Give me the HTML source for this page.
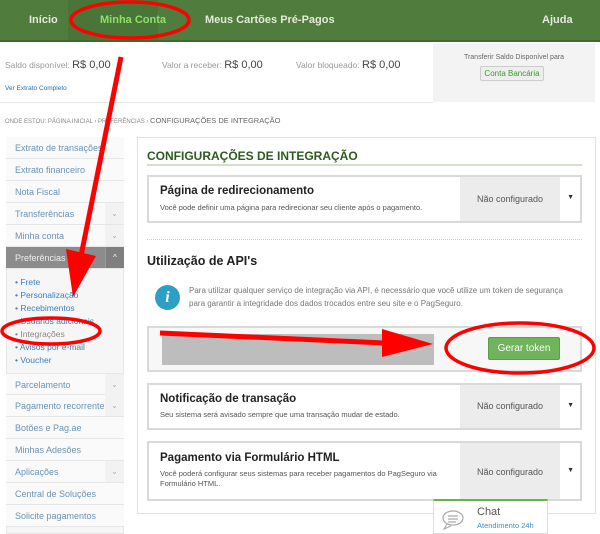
<!DOCTYPE html>
<html><head><meta charset="utf-8"><style>
*{box-sizing:border-box;margin:0;padding:0}
body{width:600px;height:534px;overflow:hidden;background:#fff;font-family:"Liberation Sans",sans-serif;position:relative}
.a{position:absolute}
.nav{left:0;top:0;width:600px;height:42px;background:#507c3e;border-bottom:2px solid #3f6a2f}
.nav span{position:absolute;top:14px;font-size:11px;font-weight:bold;color:#e3ead9}
.sb{left:6px;width:118px;height:22px;border-bottom:1px solid #e6e6e6;background:#fafafa;font-size:9px;color:#6a93b5;padding:6px 0 0 9px}
.sb i{position:absolute;right:0;top:0;width:19px;height:21px;background:#f2f2f2;font-style:normal;color:#aaa;font-size:8px;text-align:center;line-height:21px}
.box{left:147px;width:435px;border:2px solid #d9d9d9;background:#fff}
.st{position:absolute;top:0;bottom:0;right:20px;width:100px;background:#ececec;font-size:9px;color:#555;text-align:center}
.tri{position:absolute;right:6px;font-size:7px;color:#333}
.bt{font-size:11.5px;font-weight:bold;color:#222;position:absolute;left:11px}
.bd{font-size:7.5px;color:#555;position:absolute;left:11px;line-height:10px}
.sub{left:15px;font-size:8.5px;color:#3a7fc0}
</style></head><body>
<div class="a nav"><div class="a" style="left:68px;top:0;width:90px;height:40px;background:#4a7538"></div>
<span style="left:29px">Início</span><span style="left:100px;color:#8ee06a">Minha Conta</span><span style="left:205px">Meus Cartões Pré-Pagos</span><span style="left:542px">Ajuda</span></div>
<div class="a" style="left:5px;top:59px;font-size:8.5px;color:#999">Saldo disponível: <b style="font-weight:normal;font-size:11px;color:#444">R$ 0,00</b></div>
<div class="a" style="left:162px;top:59px;font-size:8.5px;color:#999">Valor a receber: <b style="font-weight:normal;font-size:11px;color:#444">R$ 0,00</b></div>
<div class="a" style="left:296px;top:59px;font-size:8.5px;color:#999">Valor bloqueado: <b style="font-weight:normal;font-size:11px;color:#444">R$ 0,00</b></div>
<div class="a" style="left:5px;top:85px;font-size:6.5px;color:#2a6cc0">Ver Extrato Completo</div>
<div class="a" style="left:0;top:102px;width:433px;height:1px;background:#e8e8e8"></div>
<div class="a" style="left:433px;top:43px;width:162px;height:59px;background:#f3f3f3"></div>
<div class="a" style="left:433px;top:54px;width:162px;text-align:center;font-size:7px;color:#666">Transferir Saldo Disponível para</div>
<div class="a" style="left:480px;top:66px;width:64px;height:15px;background:#eee;border:1px solid #ccc;border-radius:2px;font-size:8px;color:#3a9a2a;text-align:center;line-height:13px">Conta Bancária</div>
<div class="a" style="left:5px;top:116px;font-size:6px;color:#888">ONDE ESTOU: PÁGINA INICIAL › PREFERÊNCIAS › <span style="font-size:7.5px;color:#666">CONFIGURAÇÕES DE INTEGRAÇÃO</span></div>

<div class="a" style="left:6px;top:137px;width:118px;height:397px;background:#f6f6f6;border:1px solid #e6e6e6"></div>
<div class="a sb" style="top:137px">Extrato de transações</div>
<div class="a sb" style="top:159px">Extrato financeiro</div>
<div class="a sb" style="top:181px">Nota Fiscal</div>
<div class="a sb" style="top:203px">Transferências<i>⌄</i></div>
<div class="a sb" style="top:225px">Minha conta<i>⌄</i></div>
<div class="a sb" style="top:247px;background:#8c8c8c;color:#eee">Preferências<i style="background:#7f7f7f;color:#fff;border-left:1px solid #999">^</i></div>
<div class="a sub" style="top:277px">• Frete</div>
<div class="a sub" style="top:290px">• Personalização</div>
<div class="a sub" style="top:303px">• Recebimentos</div>
<div class="a sub" style="top:316px">• Usuários adicionais</div>
<div class="a sub" style="top:329px;color:#888">• Integrações</div>
<div class="a sub" style="top:342px">• Avisos por e-mail</div>
<div class="a sub" style="top:355px">• Voucher</div>
<div class="a sb" style="top:373px;border-top:1px solid #e6e6e6">Parcelamento<i>⌄</i></div>
<div class="a sb" style="top:395px">Pagamento recorrente<i>⌄</i></div>
<div class="a sb" style="top:417px">Botões e Pag.ae</div>
<div class="a sb" style="top:439px">Minhas Adesões</div>
<div class="a sb" style="top:461px">Aplicações<i>⌄</i></div>
<div class="a sb" style="top:483px">Central de Soluções</div>
<div class="a sb" style="top:505px">Solicite pagamentos</div>

<div class="a" style="left:137px;top:137px;width:459px;height:377px;border:1px solid #e2e2e2"></div>
<div class="a" style="left:147px;top:149px;font-size:12px;font-weight:bold;color:#2d5a1e">CONFIGURAÇÕES DE INTEGRAÇÃO</div>
<div class="a" style="left:147px;top:164px;width:435px;height:2px;background:#d5dfcc"></div>
<div class="a box" style="top:175px;height:48px"><div class="bt" style="top:8px">Página de redirecionamento</div><div class="bd" style="top:26px">Você pode definir uma página para redirecionar seu cliente após o pagamento.</div><div class="st" style="line-height:44px">Não configurado</div><div class="tri" style="top:17px">▼</div></div>
<div class="a" style="left:147px;top:239px;width:435px;border-top:1px dotted #ccc"></div>
<div class="a" style="left:147px;top:254px;font-size:12.5px;font-weight:bold;color:#222">Utilização de API's</div>
<div class="a" style="left:155px;top:285px;width:25px;height:25px;border-radius:50%;background:#2e9fc4;color:#fff;font:italic bold 16px 'Liberation Serif',serif;text-align:center;line-height:25px">i</div>
<div class="a" style="left:189px;top:285px;font-size:8px;color:#777;line-height:12.5px">Para utilizar qualquer serviço de integração via API, é necessário que você utilize um token de segurança<br>para garantir a integridade dos dados trocados entre seu site e o PagSeguro.</div>
<div class="a box" style="top:326px;height:46px;background:#f7f7f7"></div>
<div class="a" style="left:162px;top:334px;width:272px;height:31px;background:#bdbdbd"></div>
<div class="a" style="left:488px;top:337px;width:72px;height:23px;background:#6fb35a;border:1px solid #5c9e48;border-radius:2px;color:#fff;font-size:10px;text-align:center;line-height:21px">Gerar token</div>
<div class="a box" style="top:383px;height:47px"><div class="bt" style="top:8px">Notificação de transação</div><div class="bd" style="top:25px">Seu sistema será avisado sempre que uma transação mudar de estado.</div><div class="st" style="line-height:43px">Não configurado</div><div class="tri" style="top:17px">▼</div></div>
<div class="a box" style="top:441px;height:60px"><div class="bt" style="top:9px">Pagamento via Formulário HTML</div><div class="bd" style="top:26px">Você poderá configurar seus sistemas para receber pagamentos do PagSeguro via<br>Formulário HTML.</div><div class="st" style="line-height:58px">Não configurado</div><div class="tri" style="top:24px">▼</div></div>
<div class="a" style="left:433px;top:499px;width:115px;height:35px;background:#fff;border:1px solid #ddd;border-top:2px solid #6ab04c"></div>
<svg class="a" style="left:441px;top:508px" width="30" height="24" viewBox="0 0 30 24" fill="none" stroke="#aaa" stroke-width="1.2"><ellipse cx="12" cy="10" rx="10" ry="7"/><path d="M6 16l-3 5 7-3"/><path d="M7 8h10M7 11h10M7 14h8"/></svg>
<div class="a" style="left:477px;top:506px;font-size:11px;color:#555">Chat</div>
<div class="a" style="left:477px;top:521px;font-size:7.5px;color:#3a8fd0">Atendimento 24h</div>

<svg class="a" style="left:0;top:0" width="600" height="534">
<g fill="none" stroke="#f00" stroke-width="3.5">
<ellipse cx="130" cy="20" rx="59" ry="18"/>
<ellipse cx="51" cy="331" rx="49" ry="13"/>
<ellipse cx="520" cy="348" rx="74" ry="25"/>
</g>
<g stroke="#f00" stroke-width="5"><line x1="121" y1="57" x2="81" y2="256"/><line x1="160" y1="333" x2="385" y2="343"/></g>
<g fill="#f00"><polygon points="66,249 96,256 73,297"/><polygon points="382,329 433,344 382,357"/></g>
</svg>
</body></html>
